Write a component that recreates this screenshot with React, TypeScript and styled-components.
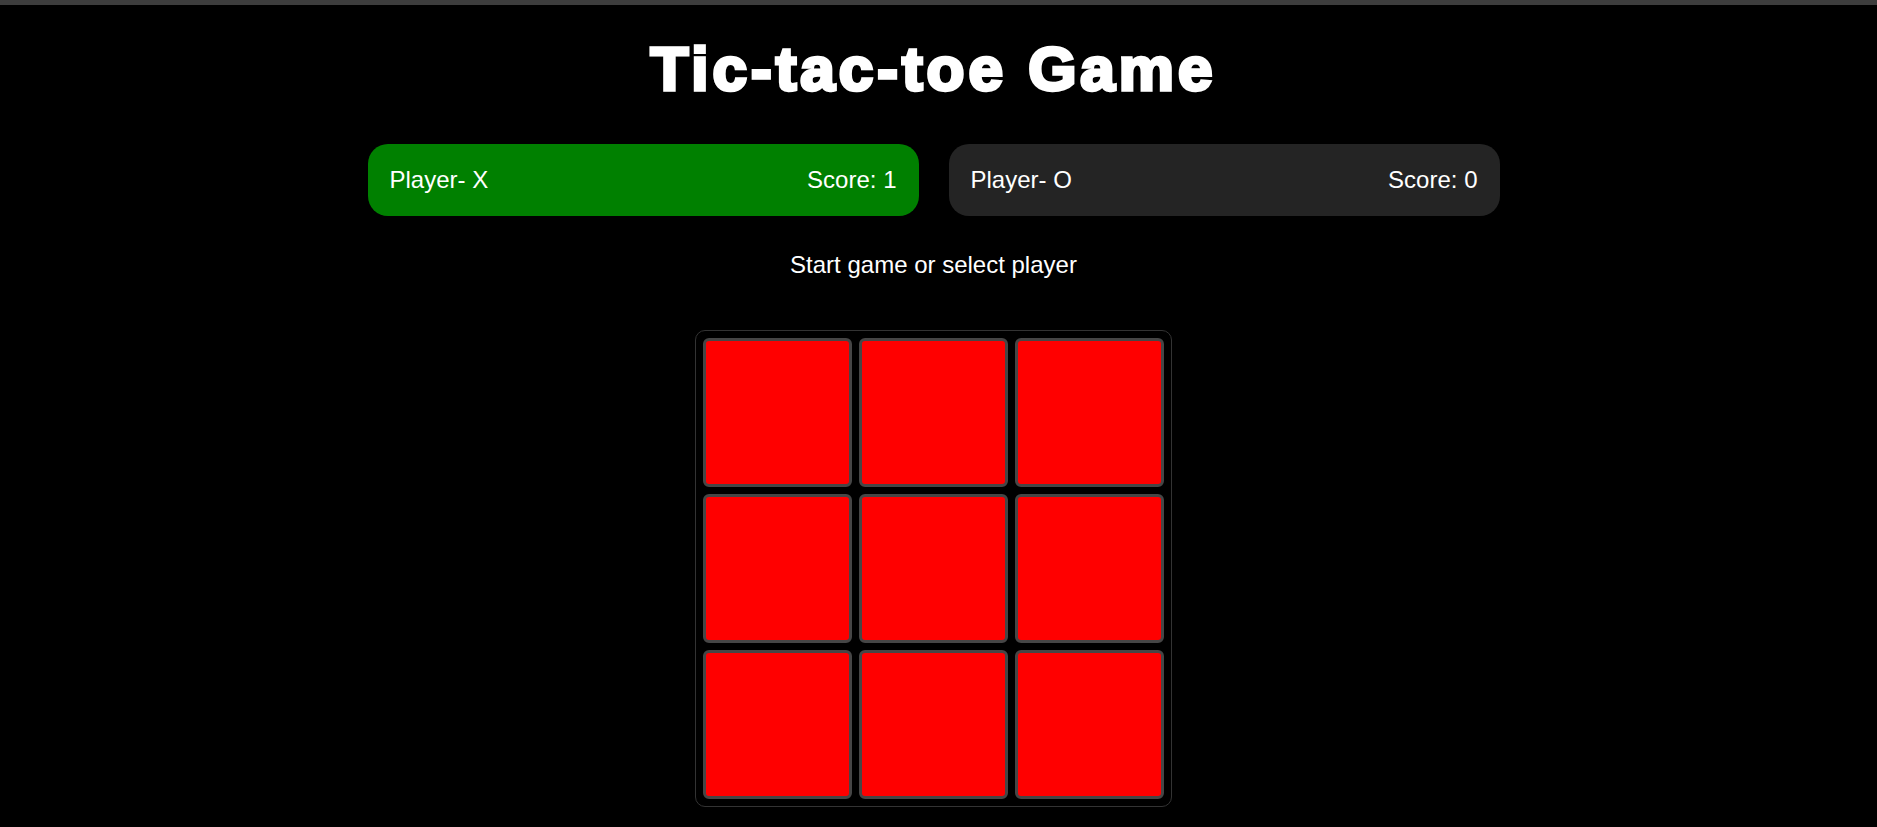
import React from 'react';
import styled, { createGlobalStyle } from 'styled-components';

const GlobalStyle = createGlobalStyle`
    html, body {
        margin: 0;
        padding: 0;
        background-color: #000;
        color: #fff;
        font-family: "Liberation Sans", Arial, sans-serif;
    }
`;

const TopStrip = styled.div`
    height: 5px;
    background-color: #3d3d3d;
`;

const Page = styled.div`
    display: flex;
    flex-direction: column;
    align-items: center;
    padding-right: 10px;
`;

const Title = styled.h1`
    margin: 28px 0 0;
    font-size: 62px;
    line-height: 71px;
    font-weight: 700;
    letter-spacing: 4px;
    -webkit-text-stroke: 3.5px #fff;
`;

const Scores = styled.div`
    display: grid;
    grid-template-columns: 1fr 1fr;
    gap: 30px;
    width: 1132px;
    margin-top: 40px;
`;

const ScoreCard = styled.div<{ $active?: boolean }>`
    display: flex;
    align-items: center;
    justify-content: space-between;
    height: 72px;
    padding: 0 22px;
    border-radius: 20px;
    background-color: ${p => (p.$active ? '#008000' : '#242424')};
    font-size: 24px;
    cursor: pointer;
`;

const Status = styled.p`
    margin: 35px 0 0;
    font-size: 24px;
    line-height: 28px;
`;

const Board = styled.div`
    display: grid;
    grid-template-columns: repeat(3, 148.8px);
    grid-auto-rows: 148.8px;
    gap: 7.2px;
    padding: 7.2px;
    margin-top: 51px;
    border: 1px solid #333;
    border-radius: 10px;
`;

const Cell = styled.button`
    margin: 0;
    padding: 0;
    background-color: #ff0000;
    border: 3px solid #464646;
    border-radius: 6px;
    cursor: pointer;
`;

const players = [
    { name: 'X', score: 1, active: true },
    { name: 'O', score: 0, active: false },
];

const App: React.FC = () => {
    return (
        <>
            <GlobalStyle />
            <TopStrip />
            <Page>
                <Title>Tic-tac-toe Game</Title>
                <Scores>
                    {players.map(p => (
                        <ScoreCard key={p.name} $active={p.active}>
                            <span>Player- {p.name}</span>
                            <span>Score: {p.score}</span>
                        </ScoreCard>
                    ))}
                </Scores>
                <Status>Start game or select player</Status>
                <Board>
                    {Array.from({ length: 9 }, (_, i) => (
                        <Cell key={i} />
                    ))}
                </Board>
            </Page>
        </>
    );
};

export default App;
